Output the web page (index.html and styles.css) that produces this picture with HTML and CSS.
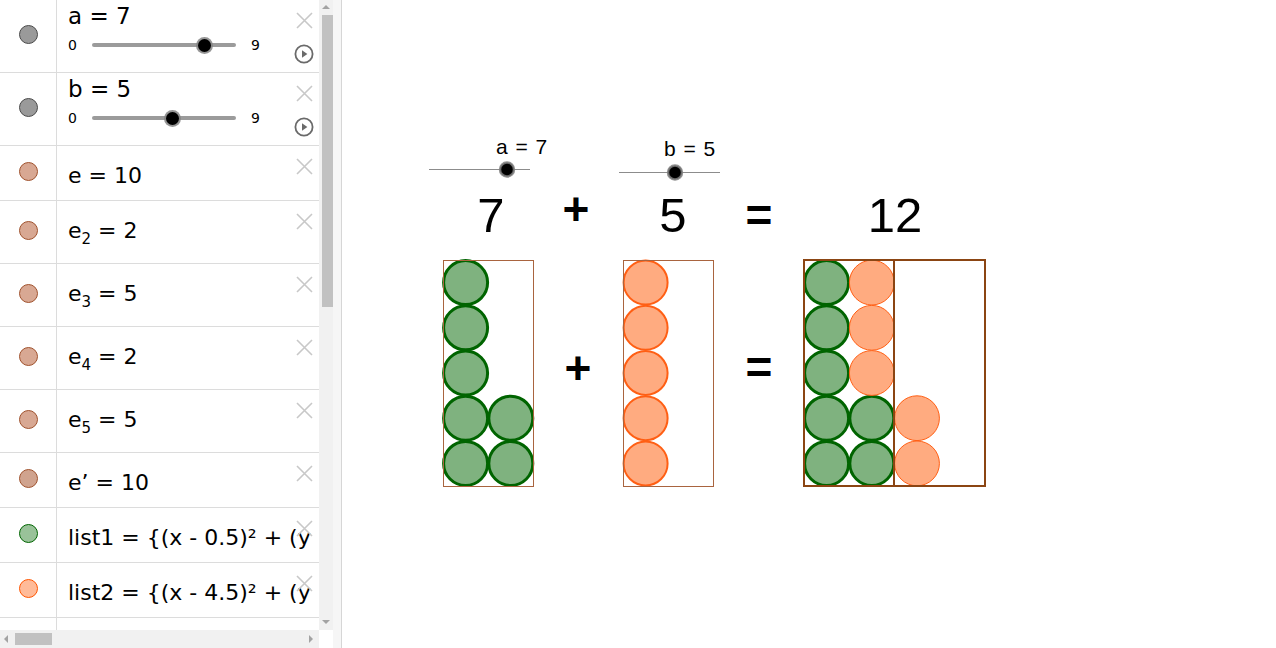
FILE: index.html
```html
<!DOCTYPE html>
<html>
<head>
	<meta charset="utf-8">
	<title>7 + 5 = 12</title>
	<link rel="stylesheet" href="styles.css">
</head>
<body>
	<div class="app">
		<div class="algebra">
			<div class="pane">
				<div class="main">
					<div class="list">
						<div class="row h73">
							<div class="mark"><span class="dot gray"></span></div>
							<div class="cell slide">
								<div class="name">a = 7</div>
								<div class="slider">
									<span class="min">0</span>
									<span class="track"><span class="knob" style="left: 77.78%"></span></span>
									<span class="max">9</span>
								</div>
							</div>
							<svg class="close" viewBox="0 0 17 17"><path d="M1 1L16 16M16 1L1 16"/></svg>
							<svg class="play" viewBox="0 0 20 20"><circle cx="10" cy="10" r="8.6"/><path d="M8 6.2L13.4 10L8 13.8Z"/></svg>
						</div>
						<div class="row h73">
							<div class="mark"><span class="dot gray"></span></div>
							<div class="cell slide">
								<div class="name">b = 5</div>
								<div class="slider">
									<span class="min">0</span>
									<span class="track"><span class="knob" style="left: 55.56%"></span></span>
									<span class="max">9</span>
								</div>
							</div>
							<svg class="close" viewBox="0 0 17 17"><path d="M1 1L16 16M16 1L1 16"/></svg>
							<svg class="play" viewBox="0 0 20 20"><circle cx="10" cy="10" r="8.6"/><path d="M8 6.2L13.4 10L8 13.8Z"/></svg>
						</div>
						<div class="row h55">
							<div class="mark"><span class="dot tan"></span></div>
							<div class="cell math">e = 10</div>
							<svg class="close" viewBox="0 0 17 17"><path d="M1 1L16 16M16 1L1 16"/></svg>
						</div>
						<div class="row h63">
							<div class="mark"><span class="dot tan"></span></div>
							<div class="cell math">e<sub class="ix">2</sub> = 2</div>
							<svg class="close" viewBox="0 0 17 17"><path d="M1 1L16 16M16 1L1 16"/></svg>
						</div>
						<div class="row h63">
							<div class="mark"><span class="dot tan"></span></div>
							<div class="cell math">e<sub class="ix">3</sub> = 5</div>
							<svg class="close" viewBox="0 0 17 17"><path d="M1 1L16 16M16 1L1 16"/></svg>
						</div>
						<div class="row h63">
							<div class="mark"><span class="dot tan"></span></div>
							<div class="cell math">e<sub class="ix">4</sub> = 2</div>
							<svg class="close" viewBox="0 0 17 17"><path d="M1 1L16 16M16 1L1 16"/></svg>
						</div>
						<div class="row h63">
							<div class="mark"><span class="dot tan"></span></div>
							<div class="cell math">e<sub class="ix">5</sub> = 5</div>
							<svg class="close" viewBox="0 0 17 17"><path d="M1 1L16 16M16 1L1 16"/></svg>
						</div>
						<div class="row h55">
							<div class="mark"><span class="dot tan dark"></span></div>
							<div class="cell math">e’ = 10</div>
							<svg class="close" viewBox="0 0 17 17"><path d="M1 1L16 16M16 1L1 16"/></svg>
						</div>
						<div class="row h55">
							<div class="mark"><span class="dot green"></span></div>
							<div class="cell math">list1 = {(x - 0.5)² + (y</div>
							<svg class="close" viewBox="0 0 17 17"><path d="M1 1L16 16M16 1L1 16"/></svg>
						</div>
						<div class="row h55">
							<div class="mark"><span class="dot orange"></span></div>
							<div class="cell math">list2 = {(x - 4.5)² + (y</div>
							<svg class="close" viewBox="0 0 17 17"><path d="M1 1L16 16M16 1L1 16"/></svg>
						</div>
						<div class="row h55">
							<div class="mark"></div>
						</div>
					</div>
					<div class="vscroll">
						<span class="arr up"></span>
						<span class="vthumb"></span>
						<span class="fill"></span>
						<span class="arr down"></span>
					</div>
				</div>
				<div class="bottom">
					<div class="hscroll">
						<span class="arr left"></span>
						<span class="hthumb"></span>
						<span class="fill"></span>
						<span class="arr right"></span>
					</div>
					<div class="corner"></div>
				</div>
			</div>
			<div class="gutter"></div>
		</div>

		<div class="graphics">
			<svg class="board" viewBox="342 0 934 648" width="934" height="648">
				<!-- sliders -->
				<line class="sl" x1="429" y1="169.5" x2="530" y2="169.5"/>
				<circle class="pt" cx="507" cy="169.5" r="7"/>
				<text class="lbl" x="496" y="154">a = 7</text>
				<line class="sl" x1="619" y1="172.5" x2="720" y2="172.5"/>
				<circle class="pt" cx="675" cy="172.5" r="7"/>
				<text class="lbl" x="664" y="156">b = 5</text>

				<!-- numbers -->
				<text class="big" x="491" y="232">7</text>
				<text class="op" x="576" y="225">+</text>
				<text class="big" x="673" y="232">5</text>
				<text class="op" x="759" y="231">=</text>
				<text class="big" x="895" y="232">12</text>

				<text class="op" x="578" y="384">+</text>
				<text class="op" x="759" y="383">=</text>

				<!-- a -->
				<g class="gc">
					<circle cx="465.6" cy="282.6" r="22"/>
					<circle cx="465.6" cy="327.8" r="22"/>
					<circle cx="465.6" cy="373" r="22"/>
					<circle cx="465.6" cy="418.2" r="22"/>
					<circle cx="465.6" cy="463.4" r="22"/>
					<circle cx="510.8" cy="418.2" r="22"/>
					<circle cx="510.8" cy="463.4" r="22"/>
				</g>
				<rect class="box" x="443.5" y="260.5" width="90" height="226"/>

				<!-- b -->
				<g class="oc">
					<circle cx="645.6" cy="282.6" r="22"/>
					<circle cx="645.6" cy="327.8" r="22"/>
					<circle cx="645.6" cy="373" r="22"/>
					<circle cx="645.6" cy="418.2" r="22"/>
					<circle cx="645.6" cy="463.4" r="22"/>
				</g>
				<rect class="box" x="623.5" y="260.5" width="90" height="226"/>

				<!-- sum -->
				<g class="gc">
					<circle cx="826.6" cy="282.6" r="22"/>
					<circle cx="826.6" cy="327.8" r="22"/>
					<circle cx="826.6" cy="373" r="22"/>
					<circle cx="826.6" cy="418.2" r="22"/>
					<circle cx="826.6" cy="463.4" r="22"/>
					<circle cx="871.8" cy="418.2" r="22"/>
					<circle cx="871.8" cy="463.4" r="22"/>
				</g>
				<g class="oc thin">
					<circle cx="871.8" cy="282.6" r="22.4"/>
					<circle cx="871.8" cy="327.8" r="22.4"/>
					<circle cx="871.8" cy="373" r="22.4"/>
					<circle cx="917" cy="418.2" r="22.4"/>
					<circle cx="917" cy="463.4" r="22.4"/>
				</g>
				<rect class="box wide" x="804" y="260" width="181" height="226"/>
				<line class="box wide" x1="894" y1="260" x2="894" y2="486"/>
			</svg>
		</div>
	</div>
</body>
</html>
```

FILE: styles.css
```css
body{margin: 0;padding: 0;background-color: #fff;}
.app{
	display: flex;
	width: 1276px;
	height: 648px;
	overflow: hidden;
	font-family: "DejaVu Sans", "Liberation Sans", sans-serif;
	color: #000;
}
.algebra{
	display: flex;
	flex: none;
	width: 341px;
	border-right: 1px solid #d6d6d6;
}
.pane{
	width: 333px;
	display: flex;
	flex-direction: column;
}
.main{
	display: flex;
	height: 630px;
}
.list{
	width: 319px;
	overflow: hidden;
}
.row{
	position: relative;
	display: flex;
	box-sizing: border-box;
	border-bottom: 1px solid #dcdcdc;
}
.h73{height: 73px;}
.h63{height: 63px;}
.h55{height: 55px;}
.mark{
	flex: none;
	width: 57px;
	box-sizing: border-box;
	border-right: 1px solid #dcdcdc;
	display: flex;
	justify-content: center;
	align-items: center;
	padding-bottom: 4px;
}
.dot{
	width: 17px;
	height: 17px;
	border-radius: 50%;
	border: 1px solid #444;
}
.gray{background-color: #9a9a9a;border-color: #4a4a4a;}
.tan{background-color: #d8a893;border-color: #a0522d;}
.tan.dark{background-color: #d0a38e;}
.green{background-color: #99c299;border-color: #006400;}
.orange{background-color: #ffbb99;border-color: #ff5500;}

.cell{
	padding-left: 11px;
	font-size: 22px;
	line-height: 26px;
	white-space: nowrap;
}
.math{padding-top: 17px;}
.ix{
	font-size: 15px;
	vertical-align: -6px;
	line-height: 0;
}
.slide{padding-top: 3px;}
.name{font-size: 23px;}
.slider{
	display: flex;
	align-items: center;
	height: 20px;
	margin-top: 6px;
	font-size: 14px;
}
.min{width: 24px;}
.max{margin-left: 15px;}
.track{
	position: relative;
	width: 144px;
	height: 4px;
	border-radius: 2px;
	background-color: #9b9b9b;
}
.knob{
	position: absolute;
	top: 50%;
	width: 13px;
	height: 13px;
	margin-left: -6.5px;
	margin-top: -6.5px;
	border-radius: 50%;
	background-color: #000;
	box-shadow: 0 0 0 2px rgba(130,130,130,0.85);
}
.close{
	position: absolute;
	left: 296px;
	top: 12px;
	width: 17px;
	height: 17px;
	fill: none;
	stroke: #c8c8c8;
	stroke-width: 1.6;
}
.play{
	position: absolute;
	left: 294px;
	top: 44px;
	width: 20px;
	height: 20px;
}
.play circle{fill: none;stroke: #6a6a6a;stroke-width: 1.8;}
.play path{fill: #6a6a6a;}

.vscroll{
	width: 14px;
	display: flex;
	flex-direction: column;
	align-items: center;
	background-color: #f1f1f1;
}
.vthumb{
	width: 11px;
	height: 292px;
	margin-top: 1px;
	margin-left: 2px;
	background-color: #c1c1c1;
}
.fill{flex: 1;}
.arr{
	width: 0;
	height: 0;
	border: 4px solid transparent;
}
.up{border-bottom-color: #a3a3a3;border-top-width: 0;margin-top: 5px;margin-bottom: 5px;}
.down{border-top-color: #a3a3a3;border-bottom-width: 0;margin-bottom: 6px;}
.bottom{
	display: flex;
	height: 18px;
}
.hscroll{
	width: 319px;
	display: flex;
	align-items: center;
	background-color: #f1f1f1;
}
.left{border-right-color: #a3a3a3;border-left-width: 0;margin-left: 4px;}
.right{border-left-color: #a3a3a3;border-right-width: 0;margin-right: 6px;}
.hthumb{
	width: 37px;
	height: 12px;
	margin-left: 7px;
	background-color: #c1c1c1;
}
.corner{width: 14px;background-color: #fff;}
.gutter{
	width: 8px;
	background-color: #f6f6f6;
}

.graphics{flex: 1;}
.board{display: block;}
.sl{stroke: #8c8c8c;stroke-width: 1;}
.pt{fill: #000;stroke: rgba(125,125,125,0.85);stroke-width: 2.5;}
.lbl{
	font-family: "Liberation Sans", Arial, sans-serif;
	font-size: 21px;
	word-spacing: 2px;
}
.big{
	font-family: "Liberation Sans", Arial, sans-serif;
	font-size: 49px;
	text-anchor: middle;
}
.op{
	font-family: "Liberation Sans", Arial, sans-serif;
	font-size: 46px;
	font-weight: bold;
	text-anchor: middle;
}
.gc circle{fill: #7fb27f;stroke: #006400;stroke-width: 3;}
.oc circle{fill: #ffab80;stroke: #ff5f14;stroke-width: 2;}
.oc.thin circle{stroke-width: 1;}
.box{fill: none;stroke: #a9643f;stroke-width: 1;}
.box.wide{stroke: #8b4513;stroke-width: 2;}
```
